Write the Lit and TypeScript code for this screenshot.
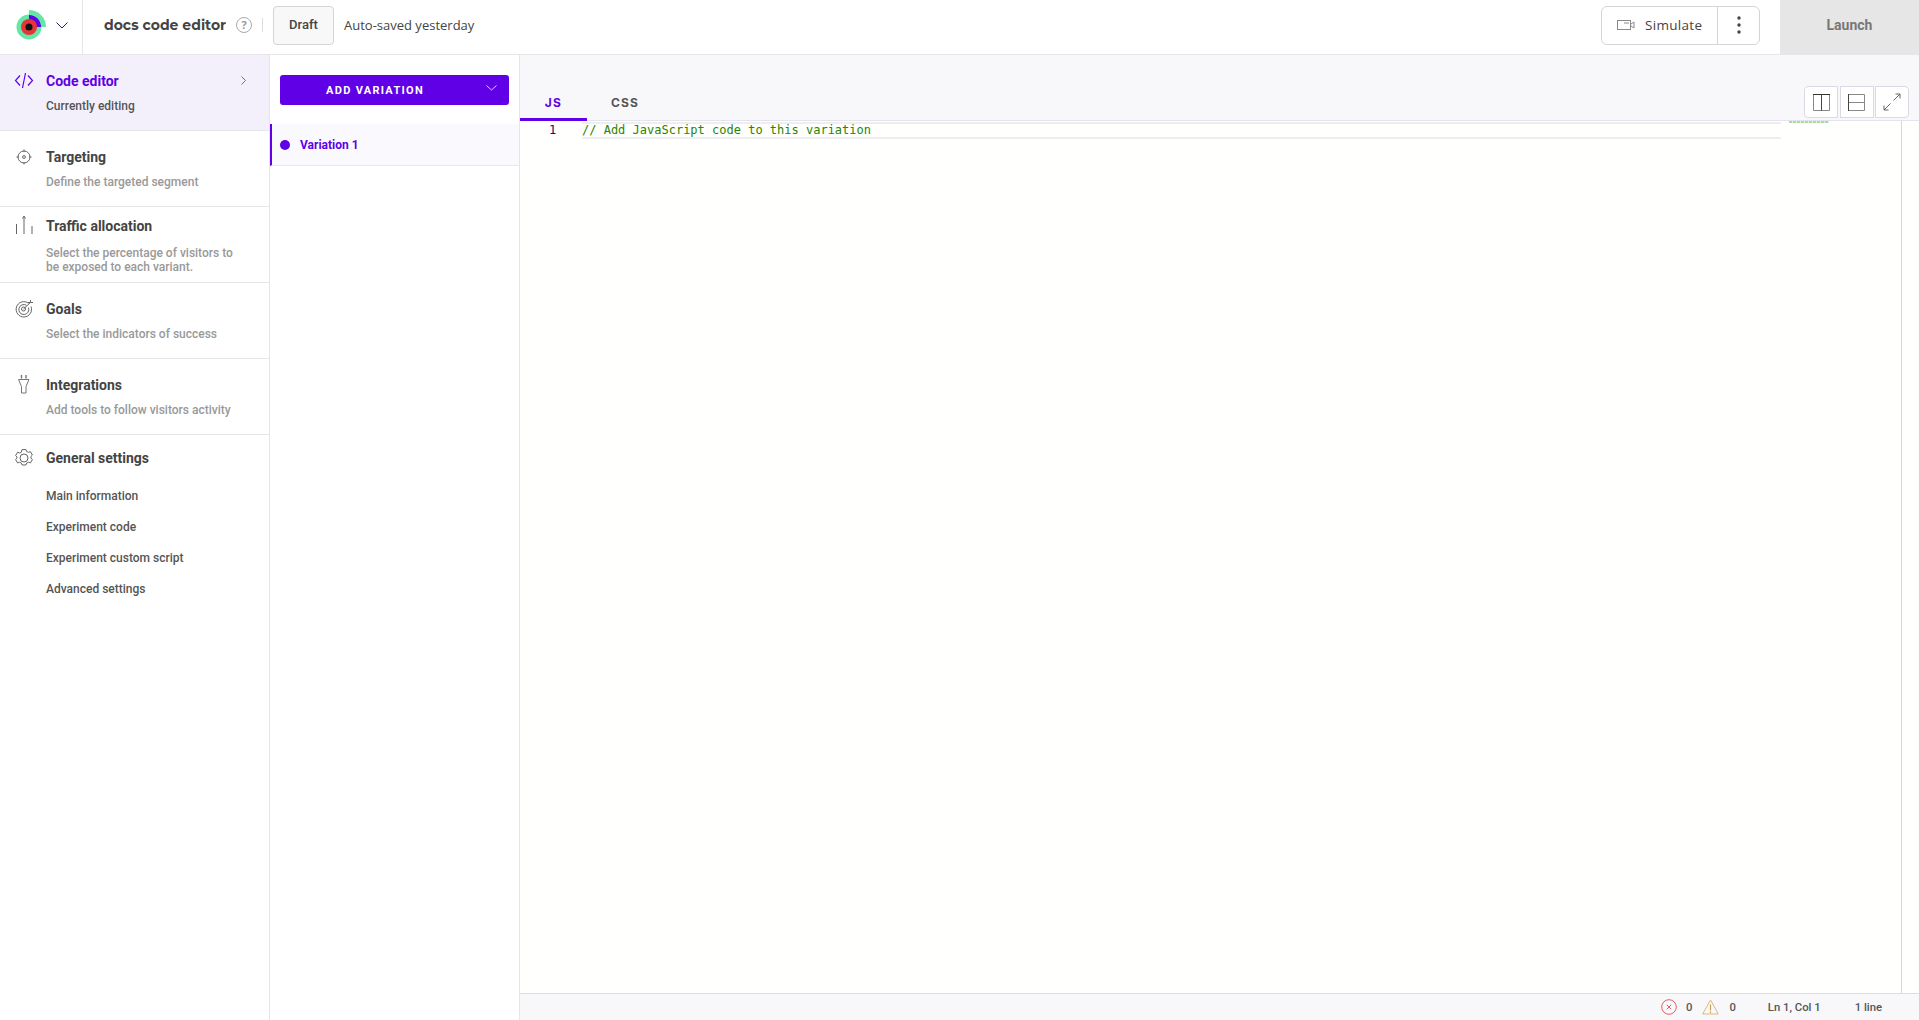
import { LitElement, html, css, svg } from "lit";
import { customElement } from "lit/decorators.js";

const I = {
  code: svg`<path d="M8 7.500 3.500 12.500 8 17.500M16 7.500 20.500 12.500 16 17.500M13.500 5 10.500 20" fill="none" stroke="currentColor" stroke-width="1.200"/>`,
  target: svg`<g fill="none" stroke="currentColor" stroke-width="1"><circle cx="12" cy="13" r="6"/><circle cx="12" cy="13" r="1.400"/><path d="M12 5.500v2.500M12 18v2.500M4.500 13H7M17 13h2.500"/></g>`,
  traffic: svg`<g fill="none" stroke="currentColor" stroke-width="1"><path d="M4.500 10v10M12 3v17M20 12v8"/><path d="M10.500 4.500 12 2l1.500 2.500" /></g>`,
  goals: svg`<g fill="none" stroke="currentColor" stroke-width="1"><path d="M16.500 7.200A7.700 7.700 0 1 0 19 10.500"/><path d="M14.500 9.300A5 5 0 1 0 16.400 11.500"/><circle cx="11.500" cy="13" r="2"/><path d="M11.500 13 18.500 6.500M16 6.500h2.500V4M18.500 6.500H21"/></g>`,
  plug: svg`<g fill="none" stroke="#777" stroke-width="1"><path d="M9.500 3v3.500M14 3v3.500" stroke-width="1.400"/><path d="M6.500 7.500h10.500L14 14.500V21h-4.500v-6.500z"/></g>`,
  gear: svg`<g fill="none" stroke="currentColor" stroke-width="1.250" transform="translate(12 13) scale(.8) translate(-13 -11)"><circle cx="13" cy="11" r="5"/><path d="M10.500 .500h5l.8 2.400 2.300 1 2.400-.9 2.500 4.300-1.800 1.700v2.200l1.800 1.700-2.500 4.300-2.400-.9-2.300 1-.8 2.400h-5l-.8-2.400-2.300-1-2.400.9-2.500-4.300 1.800-1.700V9.800L2.500 8.100 5 3.800l2.400.9 2.300-1z"/></g>`,
};

const steps = [
  { icon: I.target, t: "Targeting", d: ["Define the targeted segment"], c: "" },
  { icon: I.traffic, t: "Traffic allocation", d: ["Select the percentage of visitors to", "be exposed to each variant."], c: "traffic" },
  { icon: I.goals, t: "Goals", d: ["Select the indicators of success"], c: "" },
  { icon: I.plug, t: "Integrations", d: ["Add tools to follow visitors activity"], c: "" },
];

@customElement("app-root")
export class AppRoot extends LitElement {
  static styles = css`
    :host { display: block; width: 1919px; height: 1020px; overflow: hidden; background: #fff; font-family: Roboto, "Liberation Sans", sans-serif; color: #333; }
    svg { display: block; flex: none; }
    .top { display: flex; align-items: center; height: 54px; border-bottom: 1px solid #e6e6e8; box-sizing: content-box; }
    .top > * { margin-bottom: 4px; }
    .brand { display: flex; align-items: center; align-self: stretch; width: 83px; box-sizing: border-box; border-right: 1px solid #e6e6e8; padding: 0 0 4px 16px; margin-bottom: 0 !important; }
    .chev { margin-left: 8px; }
    .name { margin-left: 21px; font: 700 14px Montserrat, "Open Sans", sans-serif; color: #444; white-space: nowrap; width: 122px; }
    .help { margin-left: 10px; width: 16px; height: 16px; border: 1px solid #aaa; border-radius: 50%; box-sizing: border-box; color: #999; font: 700 11px/14px "Open Sans", sans-serif; text-align: center; }
    .vsep { width: 1px; height: 14px; background: #ddd; margin-left: 10px; }
    .draft { margin-left: 10px; width: 61px; height: 39px; box-sizing: border-box; border: 1px solid #d5d5d5; border-radius: 4px; background: #f8f8f8; font: 500 13px/35px Roboto, sans-serif; text-align: center; color: #444; }
    .saved { margin-left: 10px; font: 400 13px "Open Sans", sans-serif; color: #444; }
    .spacer { flex: 1; }
    .group { display: flex; width: 159px; height: 39px; box-sizing: border-box; border: 1px solid #d5d5d5; border-radius: 6px; }
    .sim { width: 116px; display: flex; align-items: center; padding-left: 15px; box-sizing: border-box; border-right: 1px solid #d5d5d5; font: 400 13.500px "Open Sans", sans-serif; color: #444; letter-spacing: .3px; gap: 10px; }
    .more { flex: 1; display: flex; align-items: center; justify-content: center; }
    .launch { margin: 0 0 0 20px !important; align-self: stretch; width: 139px; background: #e6e6e6; color: #777; font: 700 14px/50px Roboto, sans-serif; text-align: center; }
    .main { display: flex; height: 965px; }
    .side { width: 270px; box-sizing: border-box; border-right: 1px solid #e6e6e8; }
    .step { display: flex; height: 76px; box-sizing: border-box; border-bottom: 1px solid #e6e6e8; padding: 18px 0 0 12px; color: #666; }
    .step.traffic { padding-top: 11px; }
    .step.active { background: #f3f0fc; color: #5f00e6; }
    .ic { margin: -5px 10px 0 0; }
    .traffic .ic { margin-top: -4px; }
    .body { flex: 1; min-width: 0; }
    .ttl { font: 700 14px/17px Roboto, sans-serif; color: #444; }
    .desc { margin-top: 10px; font: 500 12px/13.500px Roboto, sans-serif; color: #999; }
    .traffic .desc { margin-top: 12px; }
    .active .ttl { color: #5f00e6; }
    .active .desc { color: #555; }
    .arrow { margin: 3px 23px 0 0; }
    .general { padding: 15px 0 0 12px; display: flex; color: #666; }
    .links { margin-top: 14px; display: flex; flex-direction: column; }
    .links span { font: 500 12px/31px Roboto, sans-serif; color: #555; }
    .mid { width: 250px; flex: none; box-sizing: border-box; border-right: 1px solid #e6e6e8; padding-top: 20px; }
    .add { margin: 0 10px; height: 30px; width: 229px; border-radius: 3px; background: #5f00e6; color: #fff; display: flex; align-items: center; font: 700 11px Roboto, sans-serif; letter-spacing: 1.300px; }
    .add span { width: 190px; text-align: center; }
    .add svg { margin: -4px 0 0 16px; }
    .var { margin-top: 19px; height: 42px; box-sizing: border-box; border-left: 2px solid #5f00e6; border-bottom: 1px solid #e9e8ef; background: #faf9fd; display: flex; align-items: center; padding: 1px 0 0 8px; gap: 10px; font: 700 12px Roboto, sans-serif; color: #5f00e6; }
    .dot { width: 10px; height: 10px; border-radius: 50%; background: #5f00e6; }
    .ed { flex: 1; min-width: 0; display: flex; flex-direction: column; background: #fffffe; }
    .tabs { height: 66px; flex: none; box-sizing: border-box; background: #f8f8fb; border-bottom: 1px solid #e5e3ee; display: flex; align-items: flex-end; position: relative; }
    .tab { height: 31px; box-sizing: border-box; font: 700 12px/26px Inter, sans-serif; letter-spacing: 1.200px; color: #555; text-align: center; margin-bottom: -1px; }
    .tab.js { width: 67px; color: #5f00e6; border-bottom: 3px solid #5f00e6; }
    .tab.cssx { width: 76px; }
    .tools { display: flex; gap: 1.500px; position: absolute; right: 10px; top: 31px; height: 32px; }
    .tools div { width: 34px; height: 32px; box-sizing: border-box; border: 1px solid #dcd8e6; background: #fff; display: flex; align-items: center; justify-content: center; }
    .tools div:first-child { border-radius: 4px 0 0 4px; }
    .tools div:last-child { border-radius: 0 4px 4px 0; }
    .code { flex: 1; display: flex; min-height: 0; }
    .gutter { width: 62px; flex: none; padding: 1px 0 0 29px; box-sizing: border-box; font: 12px/16px "DejaVu Sans Mono", monospace; color: #1d0a6b; }
    .lines { flex: 1; min-width: 0; }
    .line { height: 17px; margin-top: 1px; box-sizing: border-box; border-top: 2px solid #eeeeee; border-bottom: 2px solid #eeeeee; font: 12px/12px "DejaVu Sans Mono", monospace; color: #2a8500; white-space: nowrap; }
    .mini { width: 120px; flex: none; border-right: 1px solid #d8d8d8; }
    .mini i { display: block; margin-left: 8px; width: 40px; height: 2px; background: repeating-linear-gradient(90deg, #a6dd9c 0 3px, #dcf3d8 3px 4px); }
    .scroll { width: 17px; flex: none; }
    .status { height: 27px; flex: none; box-sizing: border-box; background: #f8f8fb; border-top: 1px solid #dedde6; display: flex; align-items: center; font: 500 11.300px Roboto, sans-serif; color: #555; }
    .s1 { margin-left: 1141px; }
    .n1 { margin-left: 9px; }
    .s2 { margin-left: 10px; }
    .n2 { margin-left: 10px; }
    .n3 { margin-left: 32px; }
    .n4 { margin-left: 34px; }
  `;

  render() {
    return html`
      <div class="top">
        <div class="brand">
          <svg width="32" height="32" viewBox="0 0 32 32">
            <circle cx="13" cy="18" r="12.500" fill="#64e6a7"/>
            <path d="M13 1a17 17 0 0 1 17 17H13z" fill="#64e6a7"/>
            <path d="M13 6a12 12 0 0 1 12 12H13z" fill="#5f00e6"/>
            <circle cx="13" cy="18" r="8" fill="#e5343a"/>
            <circle cx="13" cy="18" r="3.500" fill="#111"/>
          </svg>
          <svg class="chev" width="12" height="7" viewBox="0 0 12 7"><path d="M.5.500 6 6 11.500.500" fill="none" stroke="#2a1a5e" stroke-width="1"/></svg>
        </div>
        <div class="name">docs code editor</div>
        <div class="help">?</div>
        <div class="vsep"></div>
        <div class="draft">Draft</div>
        <div class="saved">Auto-saved yesterday</div>
        <div class="spacer"></div>
        <div class="group">
          <div class="sim">
            <svg width="18" height="11" viewBox="0 0 18 11"><g fill="none" stroke="#888" stroke-width="1"><rect x=".5" y=".5" width="13" height="9"/><path d="M14 4l3-2v6l-3-2M7 3h5"/></g></svg>
            Simulate
          </div>
          <div class="more"><svg width="4" height="18" viewBox="0 0 4 18"><g fill="#444"><circle cx="2" cy="2" r="1.700"/><circle cx="2" cy="9" r="1.700"/><circle cx="2" cy="16" r="1.700"/></g></svg></div>
        </div>
        <div class="launch">Launch</div>
      </div>
      <div class="main">
        <div class="side">
          <div class="step active">
            <svg class="ic" width="24" height="24" viewBox="0 0 24 24">${I.code}</svg>
            <div class="body"><div class="ttl">Code editor</div><div class="desc">Currently editing</div></div>
            <svg class="arrow" width="5" height="9" viewBox="0 0 5 9"><path d="M.5.500 4.500 4.500 .5 8.500" fill="none" stroke="#8a4cf0"/></svg>
          </div>
          ${steps.map(s => html`
            <div class="step ${s.c}">
              <svg class="ic" width="24" height="24" viewBox="0 0 24 24">${s.icon}</svg>
              <div class="body"><div class="ttl">${s.t}</div><div class="desc">${s.d.map(l => html`<div>${l}</div>`)}</div></div>
            </div>`)}
          <div class="general">
            <svg class="ic" width="24" height="24" viewBox="0 0 24 24">${I.gear}</svg>
            <div class="body"><div class="ttl">General settings</div>
              <div class="links"><span>Main information</span><span>Experiment code</span><span>Experiment custom script</span><span>Advanced settings</span></div>
            </div>
          </div>
        </div>
        <div class="mid">
          <div class="add"><span>ADD VARIATION</span><svg width="11" height="6" viewBox="0 0 11 6"><path d="M.5.500 5.500 5 10.500.500" fill="none" stroke="#fff" stroke-opacity=".8"/></svg></div>
          <div class="var"><div class="dot"></div>Variation 1</div>
        </div>
        <div class="ed">
          <div class="tabs">
            <div class="tab js">JS</div><div class="tab cssx">CSS</div>
            <div class="tools">
              <div><svg width="17" height="17" viewBox="0 0 17 17"><g fill="none" stroke="#888"><path d="M.5 1v15.500h16V1"/><path d="M8.500 1v15.500" stroke="#444"/><path d="M0 .500h17" stroke="#333"/></g></svg></div>
              <div><svg width="17" height="17" viewBox="0 0 17 17"><g fill="none" stroke="#888"><path d="M1 .500h15.500v16H1M1 8.500h15.500"/><path d="M.5 0v17" stroke="#444"/></g></svg></div>
              <div><svg width="18" height="18" viewBox="0 0 18 18"><g fill="none" stroke="#666"><path d="M10.500 7.500 17 1M12.500 1H17v4.500M7.500 10.500 1 17M1 12.500V17h4.500"/></g></svg></div>
            </div>
          </div>
          <div class="code">
            <div class="gutter">1</div>
            <div class="lines"><div class="line">// Add JavaScript code to this variation</div></div>
            <div class="mini"><i></i></div>
            <div class="scroll"></div>
          </div>
          <div class="status">
            <svg class="s1" width="16" height="16" viewBox="0 0 16 16"><circle cx="8" cy="8" r="7.300" fill="none" stroke="#e06060"/><path d="M5.800 5.800l4.400 4.400M10.200 5.800l-4.400 4.400" stroke="#e06060"/></svg>
            <span class="n1">0</span>
            <svg class="s2" width="17" height="16" viewBox="0 0 17 16"><path d="M8.500 1 16.300 15H.7z" fill="none" stroke="#d9b878"/><path d="M8.500 5.500v6M8.500 12.500v1.500" stroke="#c9a050" stroke-width="1.200"/></svg>
            <span class="n2">0</span>
            <span class="n3">Ln 1, Col 1</span>
            <span class="n4">1 line</span>
          </div>
        </div>
      </div>
    `;
  }
}
